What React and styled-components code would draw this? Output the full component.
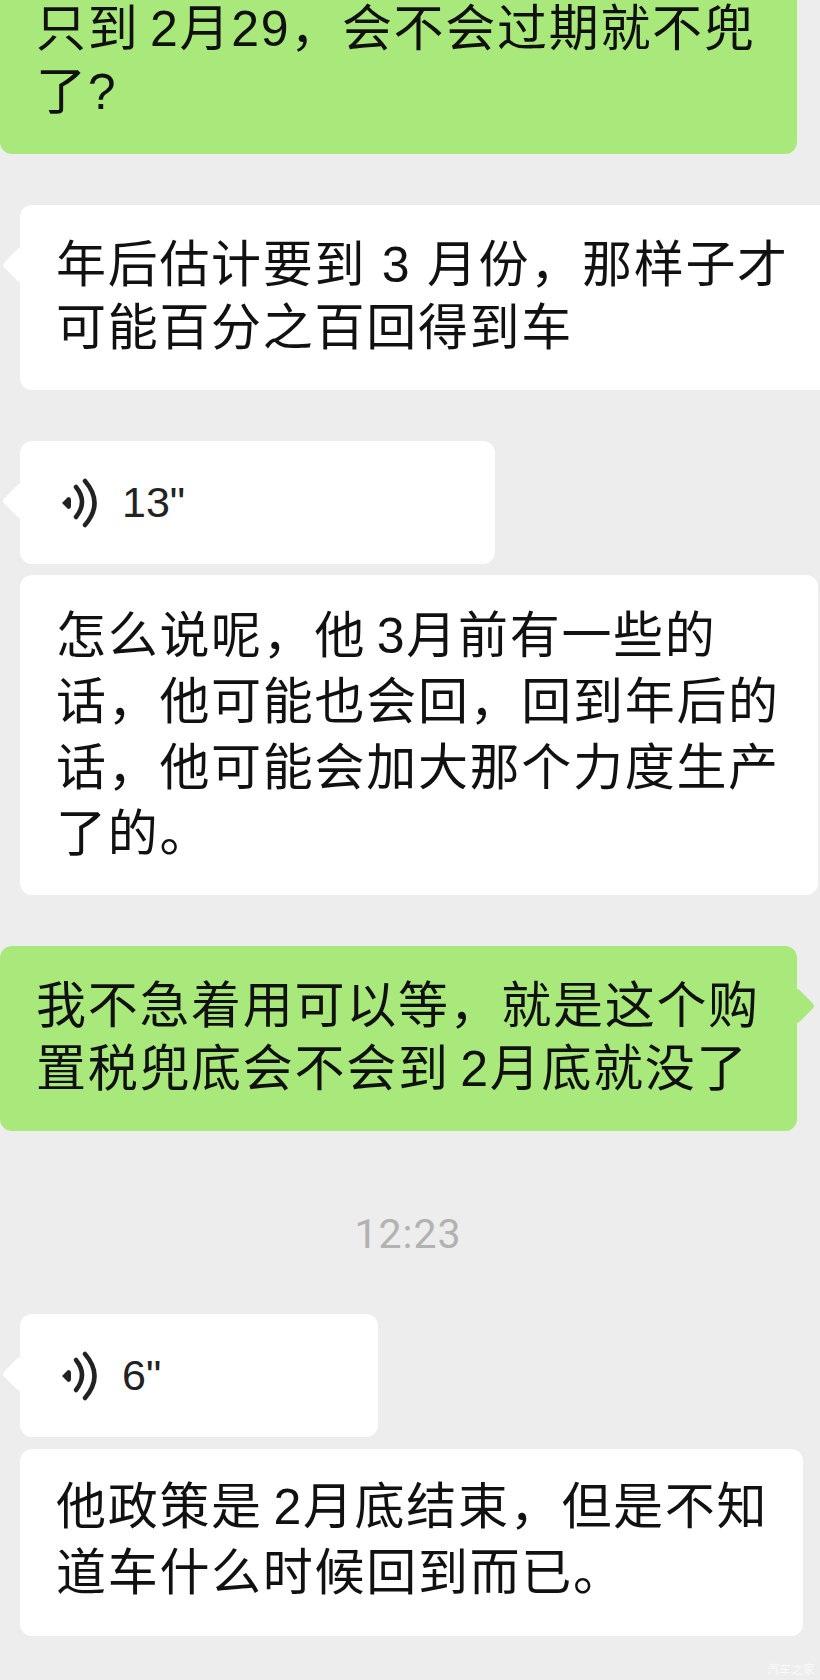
import styled, { createGlobalStyle } from 'styled-components'

const GlobalStyle = createGlobalStyle`
  html, body {
    margin: 0;
    padding: 0;
    background: #ededed;
  }
`

const Chat = styled.div`
  width: 820px;
  height: 1680px;
  overflow: hidden;
  position: relative;
  display: flex;
  flex-direction: column;
  font-family: "Liberation Sans", "Noto Sans CJK SC", sans-serif;
  color: #111;
  background: #ededed;
`

const Messages = styled.div`
  display: flex;
  flex-direction: column;
  margin-top: -31px;
`

const Bubble = styled.div`
  position: relative;
  box-sizing: border-box;
  flex: none;
  width: ${p => p.$width}px;
  margin-left: ${p => (p.$mine ? 0 : 20)}px;
  margin-top: ${p => p.$gap}px;
  padding: ${p => p.$padTop || 29}px 0 ${p => p.$padBottom || 30}px 36px;
  background: ${p => (p.$mine ? '#a9e97b' : '#fff')};
  border-radius: 12px;
  line-height: ${p => p.$leading || 63}px;
  word-spacing: ${p => (p.$tight ? -5 : 0)}px;

  ${p => p.$tail && `
    &::before {
      content: "";
      position: absolute;
      ${p.$mine ? 'right' : 'left'}: -13px;
      top: 47px;
      width: 26px;
      height: 26px;
      border-radius: 4px;
      background: ${p.$mine ? '#a9e97b' : '#fff'};
      transform: rotate(45deg);
    }
  `}
`

const Line = styled.div`
  position: relative;
  font-size: 50px;
  letter-spacing: 1.7px;
  white-space: nowrap;
`

const Voice = styled(Bubble)`
  display: flex;
  align-items: center;
  height: 123px;
  padding: 0 0 0 38px;
  gap: 24px;
`

const Seconds = styled.span`
  position: relative;
  font-size: 43px;
  color: #222;
`

const TimeLabel = styled.div`
  height: 183px;
  display: flex;
  align-items: center;
  justify-content: center;
  font-family: "Roboto", "Liberation Sans", sans-serif;
  font-size: 41px;
  color: #b2b2b2;
  letter-spacing: 1px;
  padding-right: 4px;
  padding-top: 23px;
  box-sizing: border-box;
`

const Watermark = styled.div`
  position: absolute;
  right: 5px;
  bottom: 3px;
  font-size: 12px;
  color: #fff;
  opacity: 0.7;
  font-family: "Noto Sans CJK SC", sans-serif;
`

function VoiceIcon() {
  return (
    <svg width="40" height="56" viewBox="0 0 40 56" fill="none">
      <path d="M4 28 L10 22 Q13 22 13 25 L13 31 Q13 34 10 34 Z" fill="#222" />
      <path d="M18 12 Q30 27 18 42" stroke="#222" strokeWidth="4.5" strokeLinecap="round" />
      <path d="M27 6 Q46 28 27 50" stroke="#222" strokeWidth="4.5" strokeLinecap="round" />
    </svg>
  )
}

function Text({ lines }) {
  return lines.map(line => <Line key={line}>{line}</Line>)
}

function App() {
  return (
    <Chat>
      <GlobalStyle />
      <Messages>
        <Bubble $mine $tight $width={797} $gap={0}>
          <Text lines={['只到 2月29，会不会过期就不兜', '了?']} />
        </Bubble>
        <Bubble $tail $width={840} $gap={51}>
          <Text lines={['年后估计要到 3 月份，那样子才', '可能百分之百回得到车']} />
        </Bubble>
        <Voice $tail $width={475} $gap={51}>
          <VoiceIcon />
          <Seconds>13"</Seconds>
        </Voice>
        <Bubble $tight $leading={66} $padTop={28} $padBottom={28} $width={798} $gap={11}>
          <Text lines={['怎么说呢，他 3月前有一些的', '话，他可能也会回，回到年后的', '话，他可能会加大那个力度生产', '了的。']} />
        </Bubble>
        <Bubble $mine $tail $tight $width={797} $gap={51}>
          <Text lines={['我不急着用可以等，就是这个购', '置税兜底会不会到 2月底就没了']} />
        </Bubble>
        <TimeLabel>12:23</TimeLabel>
        <Voice $tail $width={358} $gap={0}>
          <VoiceIcon />
          <Seconds>6"</Seconds>
        </Voice>
        <Bubble $tight $leading={66} $padTop={25} $padBottom={30} $width={783} $gap={12}>
          <Text lines={['他政策是 2月底结束，但是不知', '道车什么时候回到而已。']} />
        </Bubble>
      </Messages>
      <Watermark>汽车之家</Watermark>
    </Chat>
  )
}

export default App
